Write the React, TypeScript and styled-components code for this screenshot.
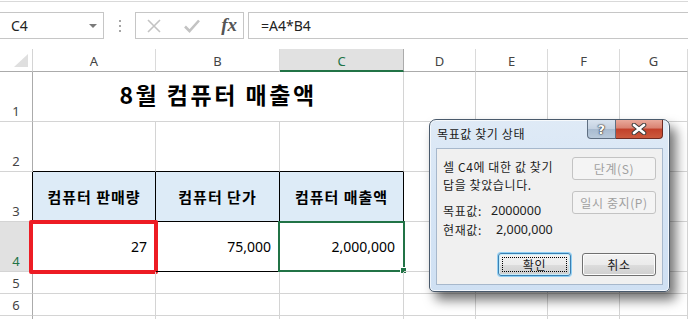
import React from "react";
import styled, { createGlobalStyle } from "styled-components";

const GlobalStyle = createGlobalStyle`
  html, body {
    margin: 0;
    padding: 0;
    background: #fff;
    overflow: hidden;
  }
  body {
    font-family: "Noto Sans CJK KR", "Noto Sans", sans-serif;
  }
`;

const GRID = "#d4d4d4";
const HEAD_LINE = "#ababab";
const GREEN = "#217346";

const columns = ["A", "B", "C", "D", "E", "F", "G"];

const App: React.FC = () => {
  return (
    <Page>
      <GlobalStyle />
      <FormulaArea>
        <FormulaRow>
          <NameBox>
            <span>C4</span>
            <DropArrow />
          </NameBox>
          <Grip>
            <i />
            <i />
            <i />
          </Grip>
          <FxBox>
            <svg width="16" height="16" viewBox="0 0 16 16">
              <path d="M2 2 L14 14 M14 2 L2 14" stroke="#c3c3c3" strokeWidth="1.6" fill="none" />
            </svg>
            <svg width="18" height="16" viewBox="0 0 18 16">
              <path d="M2 8.5 L6.5 13 L16 2.5" stroke="#c3c3c3" strokeWidth="2.6" fill="none" />
            </svg>
            <FxText>fx</FxText>
          </FxBox>
          <FormulaInput>=A4*B4</FormulaInput>
        </FormulaRow>
      </FormulaArea>

      <Sheet>
        <Corner>
          <CornerTriangle />
        </Corner>
        {columns.map((c) => (
          <ColHeader key={c} $selected={c === "C"}>
            {c}
          </ColHeader>
        ))}

        {/* row 1 */}
        <RowHeader>1</RowHeader>
        <TitleCell>8월 컴퓨터 매출액</TitleCell>
        <Cell />
        <Cell />
        <Cell />
        <Cell />

        {/* row 2 */}
        <RowHeader>2</RowHeader>
        <Cell $bb="#000" />
        <Cell $bb="#000" />
        <Cell $bb="#000" />
        <Cell />
        <Cell />
        <Cell />
        <Cell />

        {/* row 3 */}
        <RowHeader $rb="#000">3</RowHeader>
        <LabelCell>컴퓨터 판매량</LabelCell>
        <LabelCell>컴퓨터 단가</LabelCell>
        <LabelCell>컴퓨터 매출액</LabelCell>
        <Cell />
        <Cell />
        <Cell />
        <Cell />

        {/* row 4 */}
        <RowHeader $rb="#000" $selected>
          4
        </RowHeader>
        <ValueCell>
          27
          <Highlight />
        </ValueCell>
        <ValueCell>75,000</ValueCell>
        <ValueCell>
          2,000,000
          <Selection>
            <FillHandle />
          </Selection>
        </ValueCell>
        <Cell />
        <Cell />
        <Cell />
        <Cell />

        {[5, 6, 7].map((r) => (
          <React.Fragment key={r}>
            <RowHeader>{r < 7 ? r : ""}</RowHeader>
            {columns.map((c) => (
              <Cell key={c} />
            ))}
          </React.Fragment>
        ))}
      </Sheet>

      <Dialog>
        <TitleBar>
          <TitleText>목표값 찾기 상태</TitleText>
          <HelpButton>?</HelpButton>
          <CloseButton>
            <svg width="16" height="12" viewBox="0 0 16 12">
              <path d="M3 2 L13 10 M13 2 L3 10" stroke="#3a3a3a" strokeWidth="4.6" strokeLinecap="round" />
              <path d="M3 2 L13 10 M13 2 L3 10" stroke="#fff" strokeWidth="2.8" strokeLinecap="round" />
            </svg>
          </CloseButton>
        </TitleBar>
        <Panel>
          <PanelTop>
            <Message>
              <Line>셀 C4에 대한 값 찾기</Line>
              <Line>답을 찾았습니다.</Line>
              <ValueLine $gap={9}>
                <Label>목표값:</Label>
                <Amount $indent={4}>2000000</Amount>
              </ValueLine>
              <ValueLine $gap={1}>
                <Label>현재값:</Label>
                <Amount $indent={9}>2,000,000</Amount>
              </ValueLine>
            </Message>
            <SideButtons>
              <WinButton $w={84} disabled>
                단계(S)
              </WinButton>
              <WinButton $w={84} disabled>
                일시 중지(P)
              </WinButton>
            </SideButtons>
          </PanelTop>
          <ButtonRow>
            <WinButton $w={73} $focused>
              <FocusRing>확인</FocusRing>
            </WinButton>
            <WinButton $w={74}>취소</WinButton>
          </ButtonRow>
        </Panel>
      </Dialog>
    </Page>
  );
};

export default App;

const Page = styled.div`
  position: relative;
  width: 688px;
  height: 319px;
  overflow: hidden;
  background: #fff;
`;

const FormulaArea = styled.div`
  margin-top: 1px;
  border-top: 1px solid #d9d9d9;
  padding: 10px 0 10px 0;
`;

const FormulaRow = styled.div`
  display: flex;
  height: 27px;
  align-items: stretch;
`;

const NameBox = styled.div`
  box-sizing: border-box;
  width: 104px;
  border: 1px solid #c6c6c6;
  border-left: none;
  display: flex;
  align-items: center;
  justify-content: space-between;
  padding: 0 6px 0 11px;
  font-family: "Noto Sans", "Liberation Sans", sans-serif;
  font-size: 14px;
  color: #222;
`;

const DropArrow = styled.div`
  width: 0;
  height: 0;
  border-left: 4px solid transparent;
  border-right: 4px solid transparent;
  border-top: 4px solid #7a7a7a;
`;

const Grip = styled.div`
  width: 31px;
  display: flex;
  flex-direction: column;
  align-items: center;
  justify-content: center;
  gap: 3px;

  i {
    display: block;
    width: 2px;
    height: 2px;
    background: #a6a6a6;
  }
`;

const FxBox = styled.div`
  box-sizing: border-box;
  width: 109px;
  border: 1px solid #c6c6c6;
  display: flex;
  align-items: center;
  justify-content: space-between;
  padding: 0 6px 0 10px;
`;

const FxText = styled.span`
  font-family: "Liberation Serif", "DejaVu Serif", serif;
  font-style: italic;
  font-weight: bold;
  font-size: 19px;
  color: #555;
  margin-top: -2px;
`;

const FormulaInput = styled.div`
  flex: 1;
  margin-left: 4px;
  border: 1px solid #c6c6c6;
  border-right: none;
  display: flex;
  align-items: center;
  padding-left: 12px;
  font-family: "Noto Sans", "Liberation Sans", sans-serif;
  font-size: 14px;
  color: #222;
`;

const Sheet = styled.div`
  display: grid;
  grid-template-columns: 33px 123px 124px 124px 72px 72px 72px 1fr;
  grid-template-rows: 23px 50px 50px 50px 50px 22px 22px 40px;
`;

const Cell = styled.div<{ $rb?: string; $bb?: string }>`
  box-sizing: border-box;
  position: relative;
  border-right: 1px solid ${(p) => p.$rb || GRID};
  border-bottom: 1px solid ${(p) => p.$bb || GRID};
  min-width: 0;
`;

const Corner = styled.div`
  box-sizing: border-box;
  position: relative;
  border-right: 1px solid ${GRID};
  border-bottom: 1px solid ${HEAD_LINE};
`;

const CornerTriangle = styled.div`
  position: absolute;
  right: 4px;
  bottom: 4px;
  width: 0;
  height: 0;
  border-left: 14px solid transparent;
  border-bottom: 13px solid #dfdfdf;
`;

const ColHeader = styled.div<{ $selected?: boolean }>`
  box-sizing: border-box;
  display: flex;
  align-items: center;
  justify-content: center;
  font-family: "Noto Sans", "Liberation Sans", sans-serif;
  font-size: 13px;
  color: ${(p) => (p.$selected ? GREEN : "#444")};
  background: ${(p) => (p.$selected ? "#e1e1e1" : "#fff")};
  border-right: 1px solid ${(p) => (p.$selected ? "#ababab" : "#dadada")};
  border-bottom: ${(p) => (p.$selected ? `2px solid ${GREEN}` : `1px solid ${HEAD_LINE}`)};
  padding-top: 2px;
`;

const RowHeader = styled.div<{ $rb?: string; $selected?: boolean }>`
  box-sizing: border-box;
  display: flex;
  align-items: flex-end;
  justify-content: center;
  padding-bottom: 1px;
  font-family: "Noto Sans", "Liberation Sans", sans-serif;
  font-size: 13px;
  color: ${(p) => (p.$selected ? GREEN : "#444")};
  background: ${(p) => (p.$selected ? "#e1e1e1" : "#fff")};
  border-right: 1px solid ${(p) => p.$rb || HEAD_LINE};
  border-bottom: 1px solid ${GRID};
`;

const TitleCell = styled(Cell)`
  grid-column: span 3;
  display: flex;
  align-items: center;
  justify-content: center;
  font-size: 23px;
  font-weight: bold;
  color: #000;
  letter-spacing: 2.5px;
  padding-bottom: 6px;
`;

const LabelCell = styled(Cell).attrs({ $rb: "#000", $bb: "#000" })`
  display: flex;
  align-items: center;
  justify-content: center;
  background: #ddebf7;
  font-size: 15px;
  font-weight: bold;
  letter-spacing: 1px;
  color: #000;
`;

const ValueCell = styled(Cell).attrs({ $rb: "#000", $bb: "#000" })`
  display: flex;
  align-items: center;
  justify-content: flex-end;
  padding-right: 8px;
  font-family: "Noto Sans", "Liberation Sans", sans-serif;
  font-size: 14px;
  color: #000;
`;

const Highlight = styled.div`
  position: absolute;
  left: -4px;
  top: -2px;
  right: -3px;
  bottom: -3px;
  border: 4px solid #ed1c24;
  border-radius: 2px;
`;

const Selection = styled.div`
  position: absolute;
  left: -2px;
  top: -1px;
  right: -2px;
  bottom: -1px;
  border: 2px solid ${GREEN};
`;

const FillHandle = styled.div`
  position: absolute;
  right: -4px;
  bottom: -4px;
  width: 5px;
  height: 5px;
  background: ${GREEN};
  border: 1px solid #fff;
`;

const Dialog = styled.div`
  position: absolute;
  left: 429px;
  top: 119px;
  width: 241px;
  height: 173px;
  box-sizing: border-box;
  border: 1px solid #4a5a6c;
  border-radius: 7px 7px 5px 5px;
  background: linear-gradient(180deg, #dfeaf6 0%, #d6e5f5 40%, #cfe0f3 100%);
  box-shadow: inset 0 0 0 1px rgba(255, 255, 255, 0.7), 6px 8px 12px rgba(0, 0, 0, 0.55);
  display: flex;
  flex-direction: column;
  font-family: "Noto Sans CJK KR", "Noto Sans", sans-serif;
  font-size: 12px;
  letter-spacing: 0.6px;
  color: #1e1e1e;
`;

const TitleBar = styled.div`
  height: 28px;
  display: flex;
  align-items: flex-start;
  padding-right: 6px;
`;

const TitleText = styled.div`
  flex: 1;
  padding: 5px 0 0 7px;
  font-size: 12px;
  color: #1a1a1a;
`;

const HelpButton = styled.div`
  box-sizing: border-box;
  width: 29px;
  height: 19px;
  border: 1px solid #5f6f82;
  border-top: none;
  border-radius: 0 0 0 4px;
  background: linear-gradient(180deg, #d9e3ee 0%, #c3d1e1 50%, #a8bbd0 51%, #b9cadb 100%);
  display: flex;
  align-items: center;
  justify-content: center;
  font-family: "DejaVu Sans", sans-serif;
  font-weight: bold;
  font-size: 13px;
  color: #fff;
  text-shadow: 0 0 1px #333, 0 0 1px #333, 0 0 2px #333;
`;

const CloseButton = styled.div`
  box-sizing: border-box;
  width: 47px;
  height: 19px;
  border: 1px solid #6e2a22;
  border-left: none;
  border-top: none;
  border-radius: 0 0 4px 0;
  background: linear-gradient(180deg, #e9a99b 0%, #d98271 45%, #c2402a 50%, #cc5a3e 100%);
  display: flex;
  align-items: center;
  justify-content: center;
`;

const Panel = styled.div`
  flex: 1;
  margin: 0 6px 6px 6px;
  border: 1px solid #a7b8cc;
  background: #f0f0f0;
  display: flex;
  flex-direction: column;
`;

const PanelTop = styled.div`
  flex: 1;
  display: flex;
  padding: 8px 6px 0 6px;
`;

const Message = styled.div`
  flex: 1;
  padding-top: 1px;
`;

const Line = styled.div`
  line-height: 17.5px;
  white-space: nowrap;
`;

const ValueLine = styled.div<{ $gap: number }>`
  line-height: 18px;
  margin-top: ${(p) => p.$gap}px;
  display: flex;
  white-space: nowrap;
`;

const Label = styled.span`
  flex: none;
  width: 44px;
`;

const Amount = styled.span<{ $indent: number }>`
  margin-left: ${(p) => p.$indent}px;
  font-family: "Noto Sans", "Liberation Sans", sans-serif;
  font-size: 12.5px;
  letter-spacing: 0;
`;

const SideButtons = styled.div`
  display: flex;
  flex-direction: column;
  gap: 11px;
`;

const ButtonRow = styled.div`
  display: flex;
  justify-content: flex-end;
  gap: 11px;
  padding: 0 6px 8px 0;
`;

const WinButton = styled.button<{ $w: number; $focused?: boolean }>`
  box-sizing: border-box;
  width: ${(p) => p.$w}px;
  height: 23px;
  padding: 0;
  border-radius: 3px;
  font-family: "Noto Sans CJK KR", "Noto Sans", sans-serif;
  font-size: 12px;
  letter-spacing: 0.6px;
  display: flex;
  align-items: center;
  justify-content: center;
  color: #1a1a1a;
  border: 1px solid ${(p) => (p.$focused ? "#3c7fb1" : "#707070")};
  background: linear-gradient(180deg, #f2f2f2 0%, #ebebeb 50%, #dddddd 51%, #cfcfcf 100%);
  box-shadow: ${(p) => (p.$focused ? "0 0 0 1px #8fd0f5, inset 0 0 0 1px #c6ecfb" : "inset 0 0 0 1px #fcfcfc")};

  &:disabled {
    color: #a0a0a0;
    border-color: #c3c3c3;
    background: #f4f4f4;
    box-shadow: none;
  }
`;

const FocusRing = styled.span`
  box-sizing: border-box;
  width: calc(100% - 6px);
  height: calc(100% - 6px);
  border: 1px dotted #000;
  display: flex;
  align-items: center;
  justify-content: center;
`;
